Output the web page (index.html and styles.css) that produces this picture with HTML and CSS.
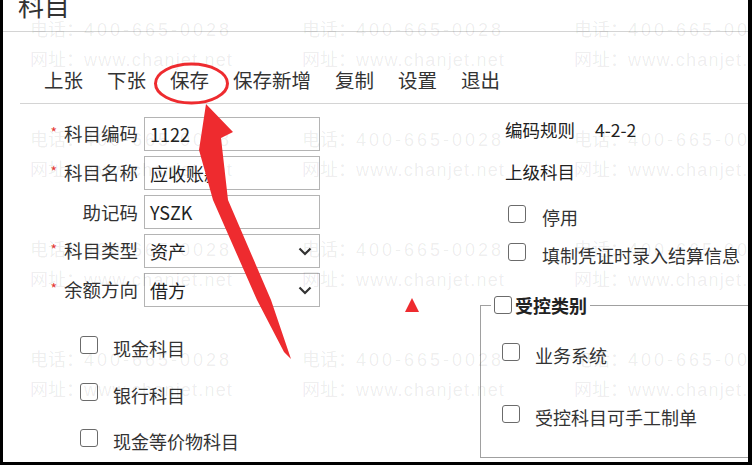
FILE: index.html
```html
<!DOCTYPE html>
<html lang="zh">
<head>
<meta charset="utf-8">
<title>科目</title>
<link rel="stylesheet" href="styles.css">
</head>
<body>
<div class="screen">
  <div class="title"><span>科目</span></div>
  <div class="toolbar">
    <span>上张</span><span>下张</span><span>保存</span><span>保存新增</span><span>复制</span><span>设置</span><span>退出</span>
  </div>
  <div class="main">
    <div class="left">
      <div class="row"><div class="lbl"><i class="req">*</i>科目编码</div><div class="field">1122</div></div>
      <div class="row"><div class="lbl"><i class="req">*</i>科目名称</div><div class="field">应收账款</div></div>
      <div class="row"><div class="lbl">助记码</div><div class="field">YSZK</div></div>
      <div class="row"><div class="lbl"><i class="req">*</i>科目类型</div><div class="field">资产<svg class="chev" width="14" height="9" viewBox="0 0 14 9"><path d="M1.5 1.5 L7 7 L12.5 1.5" fill="none" stroke="#333" stroke-width="2.2"/></svg></div></div>
      <div class="row"><div class="lbl"><i class="req">*</i>余额方向</div><div class="field">借方<svg class="chev" width="14" height="9" viewBox="0 0 14 9"><path d="M1.5 1.5 L7 7 L12.5 1.5" fill="none" stroke="#333" stroke-width="2.2"/></svg></div></div>
      <div class="checks">
        <div class="chk"><span class="box"></span>现金科目</div>
        <div class="chk"><span class="box"></span>银行科目</div>
        <div class="chk"><span class="box"></span>现金等价物科目</div>
      </div>
    </div>
    <div class="mid"><span class="tri"></span></div>
    <div class="right">
      <div class="info"><span>编码规则</span><span>4-2-2</span></div>
      <div class="info"><span>上级科目</span></div>
      <div class="chk c1"><span class="box"></span>停用</div>
      <div class="chk c2"><span class="box"></span>填制凭证时录入结算信息</div>
      <fieldset class="ctrl">
        <legend><span class="box"></span>受控类别</legend>
        <div class="chk"><span class="box"></span>业务系统</div>
        <div class="chk f2"><span class="box"></span>受控科目可手工制单</div>
      </fieldset>
    </div>
  </div>
  <div class="wm">
    <div class="wc"><p>电话：<span class="d">400-665-0028</span></p><p>网址：<span class="u">www.chanjet.net</span></p></div>
    <div class="wc"><p>电话：<span class="d">400-665-0028</span></p><p>网址：<span class="u">www.chanjet.net</span></p></div>
    <div class="wc"><p>电话：<span class="d">400-665-0028</span></p><p>网址：<span class="u">www.chanjet.net</span></p></div>
    <div class="wc"><p>电话：<span class="d">400-665-0028</span></p><p>网址：<span class="u">www.chanjet.net</span></p></div>
    <div class="wc"><p>电话：<span class="d">400-665-0028</span></p><p>网址：<span class="u">www.chanjet.net</span></p></div>
    <div class="wc"><p>电话：<span class="d">400-665-0028</span></p><p>网址：<span class="u">www.chanjet.net</span></p></div>
    <div class="wc"><p>电话：<span class="d">400-665-0028</span></p><p>网址：<span class="u">www.chanjet.net</span></p></div>
    <div class="wc"><p>电话：<span class="d">400-665-0028</span></p><p>网址：<span class="u">www.chanjet.net</span></p></div>
    <div class="wc"><p>电话：<span class="d">400-665-0028</span></p><p>网址：<span class="u">www.chanjet.net</span></p></div>
    <div class="wc"><p>电话：<span class="d">400-665-0028</span></p><p>网址：<span class="u">www.chanjet.net</span></p></div>
    <div class="wc"><p>电话：<span class="d">400-665-0028</span></p><p>网址：<span class="u">www.chanjet.net</span></p></div>
    <div class="wc"><p>电话：<span class="d">400-665-0028</span></p><p>网址：<span class="u">www.chanjet.net</span></p></div>
  </div>
</div>
<svg class="annot" width="752" height="468" viewBox="0 0 752 468">
  <ellipse cx="191.5" cy="83.5" rx="36" ry="19.5" fill="none" stroke="#ee2b2f" stroke-width="3"/>
  <polygon points="206,104 233,132 221,138 228,200 271,300 291,359 284,352 257,300 213,200 199,150" fill="#ee2b2f"/>
</svg>
</body>
</html>
```
FILE: styles.css
```css
* { box-sizing: border-box; margin: 0; padding: 0; }
html, body { width: 752px; height: 468px; overflow: hidden; background: #fff; }
body { position: relative; font-family: "Noto Sans CJK SC", "Noto Sans", sans-serif; color: #333; }

.screen {
  position: relative;
  width: 752px;
  height: 465px;
  border-left: 3px solid #000;
  border-right: 4px solid #000;
  border-bottom: 3px solid #000;
  overflow: hidden;
}

.title { height: 32px; border-bottom: 1px solid #d4d4d4; overflow: hidden; padding-left: 15px; }
.title span { display: block; font-size: 26px; line-height: 26px; margin-top: -8px; color: #333; }

.toolbar {
  margin-left: 17px;
  padding: 36px 0 11px 24px;
  border-bottom: 1px solid #d4d4d4;
  display: flex;
  gap: 24px;
  font-size: 19.5px;
  line-height: 24px;
  color: #333;
}

.main { display: flex; }

.left { width: 330px; flex: none; padding-top: 13px; }
.row { display: flex; align-items: center; height: 34px; margin-bottom: 5px; }
.lbl { width: 135px; text-align: right; font-size: 18.5px; line-height: 24px; white-space: nowrap; }
.req { font-style: normal; color: #e53935; font-size: 14px; position: relative; top: -3px; margin-right: 7px; }
.field {
  margin-left: 6px;
  width: 176px;
  height: 34px;
  border: 1px solid #b4b4b4;
  padding: 0 7px 0 5px;
  display: flex;
  align-items: center;
  justify-content: space-between;
  font-size: 18px;
  color: #222;
}
.checks { margin-top: 29px; padding-left: 77px; }
.chk { display: flex; align-items: flex-start; height: 24px; font-size: 18px; line-height: 24px; white-space: nowrap; }
.box { width: 18px; height: 18px; border: 1.5px solid #6b6b6b; border-radius: 3px; margin-right: 15px; flex: none; }
.checks .chk + .chk { margin-top: 22.5px; }

.mid { width: 147px; flex: none; padding: 194px 0 0 72px; }
.tri {
  display: block;
  width: 0;
  height: 0;
  border-left: 7.5px solid transparent;
  border-right: 7.5px solid transparent;
  border-bottom: 14px solid #ee2b2f;
}

.right { flex: 1; padding-top: 14px; margin-right: -10px; }
.info { padding-left: 25px; font-size: 17.5px; line-height: 24px; display: flex; gap: 20px; color: #222; }
.info + .info { margin-top: 18px; }
.right > .chk { padding-left: 28px; }
.right > .chk .box { margin-right: 16px; }
.c1 { margin-top: 20.5px; }
.c2 { margin-top: 14px; }

.ctrl {
  margin-top: 27.5px;
  border: 1px solid #a0a0a0;
  padding: 26.5px 0 28px 21px;
}
.ctrl legend {
  margin-left: -11px;
  padding: 0 3px;
  display: flex;
  align-items: center;
  font-size: 18px;
  font-weight: bold;
  line-height: 22px;
  color: #222;
}
.ctrl legend .box { margin-right: 3px; }
.ctrl .f2 { margin-top: 38.5px; }

.wm {
  position: absolute;
  top: 15px;
  left: 27px;
  display: grid;
  grid-template-columns: repeat(3, 272px);
  grid-auto-rows: 110px;
  pointer-events: none;
  z-index: 2;
  color: rgba(0, 0, 0, 0.075);
  font-family: "Liberation Sans", "Noto Sans CJK SC", sans-serif;
  font-size: 18px;
  line-height: 30px;
  white-space: nowrap;
}
.wm .d { letter-spacing: 3px; }
.wm .u { letter-spacing: 1.2px; }

.annot { position: absolute; top: 0; left: 0; z-index: 3; pointer-events: none; }
```
